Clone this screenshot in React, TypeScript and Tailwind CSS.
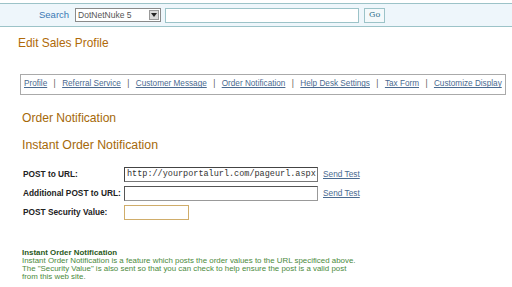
import React from "react";

const TABS = ['Profile','Referral Service','Customer Message','Order Notification','Help Desk Settings','Tax Form','Customize Display'];

export default function App(){
  return (
    <div className="w-[512px] h-[287px] overflow-hidden bg-white text-[#222] font-['Liberation_Sans',Tahoma,sans-serif]">
      {/* search bar */}
      <div className="mt-[3px] h-[24px] border-y border-[#9cc3c8] bg-[#eef6fb] flex items-center pl-[39px]">
        <span className="text-[9.5px] text-[#3a78b4] mr-[6px]">Search</span>
        <div className="w-[86px] h-[14px] border border-[#8a8a8a] bg-white flex items-center justify-between pl-[2px] pr-[1px]">
          <span className="text-[8.5px] text-[#555] leading-none">DotNetNuke 5</span>
          <span className="w-[10px] h-[10px] bg-[#d8d8d8] border border-[#999] flex items-center justify-center">
            <svg width="6" height="4" viewBox="0 0 6 4"><path d="M0 0h6L3 4z" fill="#222"/></svg>
          </span>
        </div>
        <div className="ml-[4px] w-[194px] h-[15px] border border-[#9cc3c8] bg-white"/>
        <div className="ml-[5px] w-[21px] h-[15px] border border-[#9cc3c8] bg-[#f4f9fb] flex items-center justify-center text-[8px] text-[#2e6f8a] font-['DejaVu_Serif',serif]">Go</div>
      </div>

      <div className="mt-[8px] pl-[18px] text-[11.9px] text-[#b06a08]">Edit Sales Profile</div>

      {/* tab links */}
      <div className="mt-[21px] ml-[20px] w-[486px] h-[21px] border border-[#aaa] flex items-center pl-[3px] text-[8.2px] text-[#4a6a90]">
        {TABS.map((t,i)=>(
          <React.Fragment key={t}>
            {i>0 && <span className="mx-[6.4px] text-[#555]">|</span>}
            <span className="underline">{t}</span>
          </React.Fragment>
        ))}
      </div>

      <div className="mt-[14px] pl-[22px] text-[12.1px] text-[#a5690a]">Order Notification</div>
      <div className="mt-[9px] pl-[22px] text-[12.3px] text-[#a5690a]">Instant Order Notification</div>

      {/* form */}
      <div className="mt-[13px] pl-[23px] flex flex-col gap-[5px] text-[8.3px] font-bold">
        <div className="flex items-center h-[14px]">
          <span className="w-[101px]">POST to URL:</span>
          <div className="w-[194px] h-[15px] border border-[#777] border-t-[#444] border-l-[#444] bg-white flex items-center pl-[2px] font-normal font-['Liberation_Mono',monospace] text-[8.5px] text-[#333]">http://yourportalurl.com/pageurl.aspx</div>
          <span className="ml-[5px] font-normal underline text-[#4a6a90]">Send Test</span>
        </div>
        <div className="flex items-center h-[14px]">
          <span className="w-[101px]">Additional POST to URL:</span>
          <div className="w-[194px] h-[15px] border border-[#999] border-t-[#555] border-l-[#555] bg-white"/>
          <span className="ml-[5px] font-normal underline text-[#4a6a90]">Send Test</span>
        </div>
        <div className="flex items-center h-[14px]">
          <span className="w-[101px]">POST Security Value:</span>
          <div className="w-[65px] h-[15px] border border-[#d0ad6a] bg-white"/>
        </div>
      </div>

      {/* help text */}
      <div className="mt-[30px] pl-[22px] text-[7.9px] leading-[8px] text-[#4b8a3c]">
        <div className="font-bold text-[#2a5a22]">Instant Order Notification</div>
        <div>Instant Order Notification is a feature which posts the order values to the URL specificed above.</div>
        <div>The "Security Value" is also sent so that you can check to help ensure the post is a valid post</div>
        <div>from this web site.</div>
      </div>
    </div>
  );
}
